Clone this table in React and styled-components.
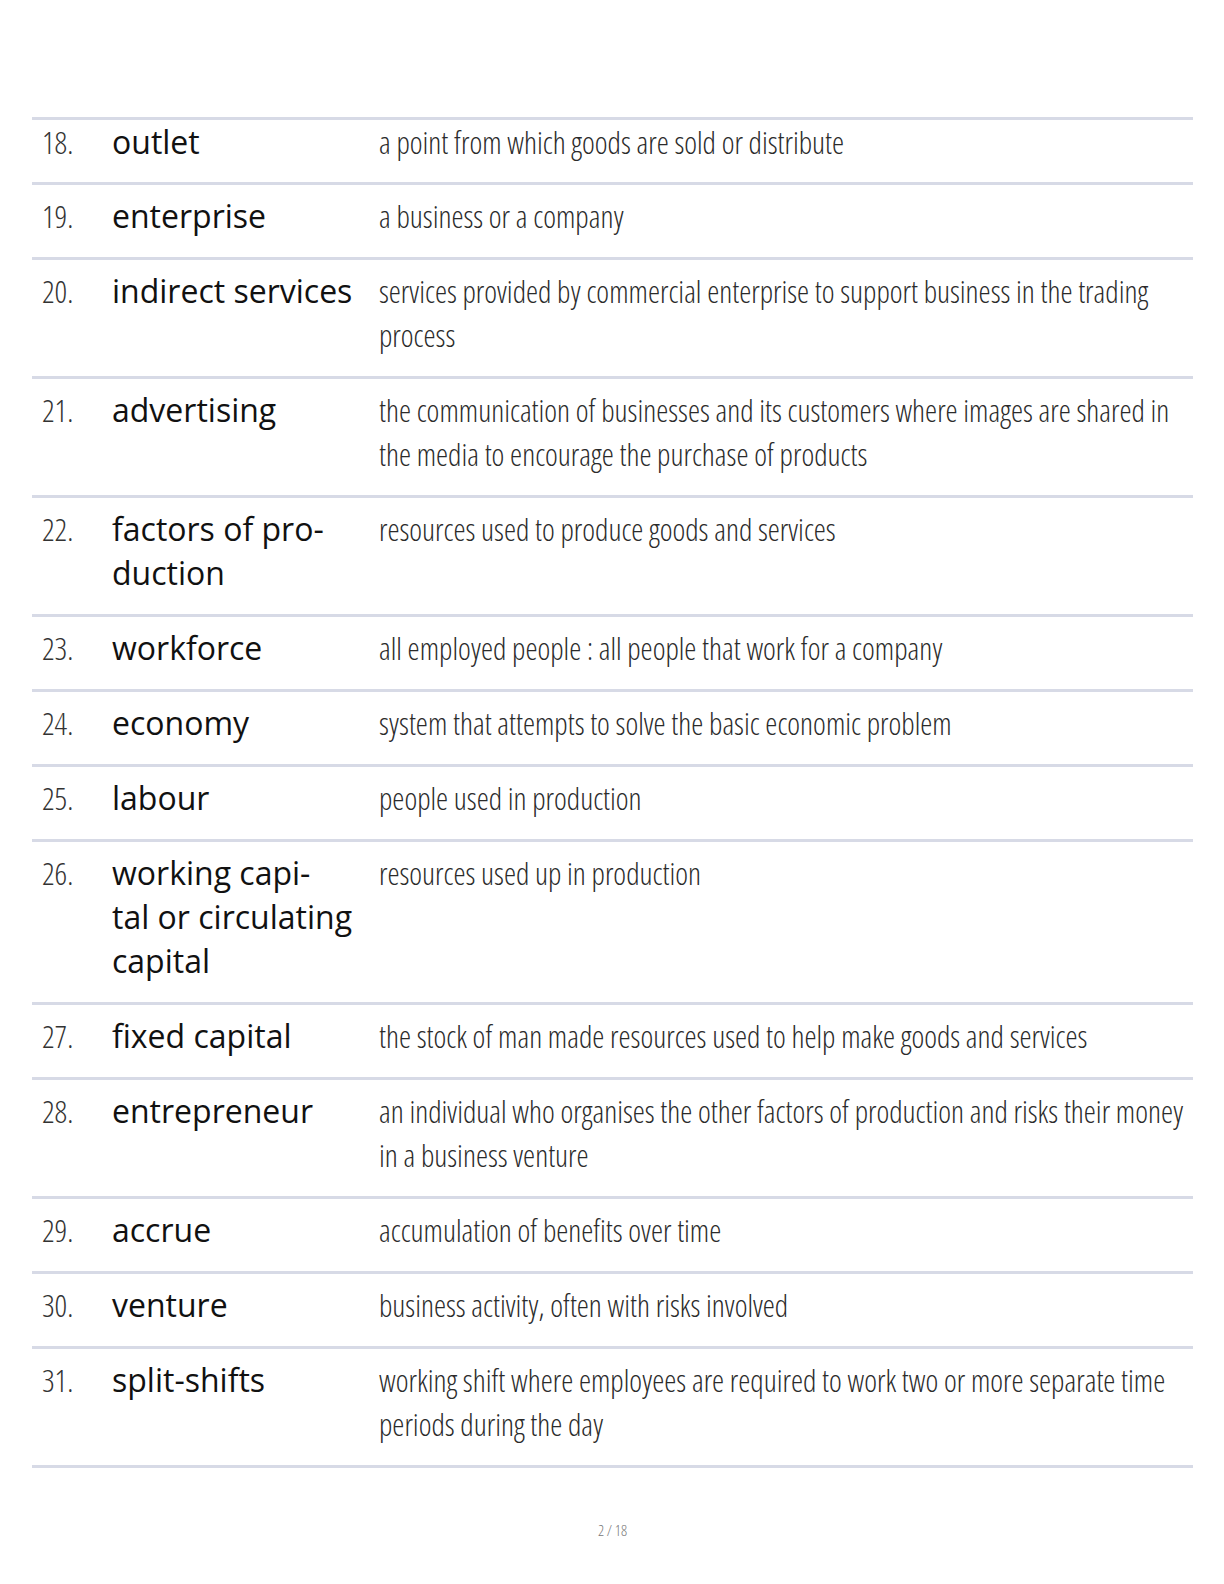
import React from 'react';
import styled, { createGlobalStyle } from 'styled-components';

const GlobalStyle = createGlobalStyle`
  html, body {
    margin: 0;
    padding: 0;
    background: #ffffff;
  }
`;

const Page = styled.div`
  width: 1224px;
  min-height: 1584px;
  box-sizing: border-box;
  padding: 117px 31px 0 32px;
  display: flex;
  flex-direction: column;
`;

const Table = styled.div`
  border-top: 3px solid #d7dae6;
  display: flex;
  flex-direction: column;
`;

const Row = styled.div`
  display: grid;
  grid-template-columns: 80px 267px 1fr;
  padding: ${(p) => (p.first ? '0 0 18px' : '9px 0 19px')};
  border-bottom: 3px solid #d7dae6;
`;

const Num = styled.div`
  padding-left: 10px;
  font-family: 'Open Sans', 'Liberation Sans', sans-serif;
  font-stretch: 75%;
  font-weight: 300;
  font-size: 31px;
  line-height: 44px;
  color: #333;
`;

const Term = styled.div`
  font-family: 'Open Sans', 'Noto Sans', sans-serif;
  font-size: 32px;
  line-height: 44px;
  color: #111;
  white-space: nowrap;
`;

const Def = styled.div`
  font-family: 'Open Sans', 'Liberation Sans', sans-serif;
  font-stretch: 75%;
  font-weight: 300;
  font-size: 30.5px;
  line-height: 44px;
  color: #2b2b2b;
`;

const Footer = styled.div`
  margin-top: 52px;
  text-align: center;
  font-family: 'Open Sans', 'Liberation Sans', sans-serif;
  font-stretch: 75%;
  font-weight: 300;
  font-size: 15px;
  color: #777;
`;

const rows = [
  ['18.', ['outlet'], 'a point from which goods are sold or distribute'],
  ['19.', ['enterprise'], 'a business or a company'],
  ['20.', ['indirect services'], 'services provided by commercial enterprise to support business in the trading process'],
  ['21.', ['advertising'], 'the communication of businesses and its customers where images are shared in the media to encourage the purchase of products'],
  ['22.', ['factors of pro-', 'duction'], 'resources used to produce goods and services'],
  ['23.', ['workforce'], 'all employed people : all people that work for a company'],
  ['24.', ['economy'], 'system that attempts to solve the basic economic problem'],
  ['25.', ['labour'], 'people used in production'],
  ['26.', ['working capi-', 'tal or circulating', 'capital'], 'resources used up in production'],
  ['27.', ['fixed capital'], 'the stock of man made resources used to help make goods and services'],
  ['28.', ['entrepreneur'], 'an individual who organises the other factors of production and risks their money in a business venture'],
  ['29.', ['accrue'], 'accumulation of benefits over time'],
  ['30.', ['venture'], 'business activity, often with risks involved'],
  ['31.', ['split-shifts'], 'working shift where employees are required to work two or more separate time periods during the day'],
];

const App = () => {
  return (
    <>
      <GlobalStyle />
      <Page>
        <Table>
          {rows.map(([n, term, def], i) => (
            <Row key={n} first={i === 0}>
              <Num>{n}</Num>
              <Term>
                {term.map((line, j) => (
                  <React.Fragment key={j}>
                    {j > 0 && <br />}
                    {line}
                  </React.Fragment>
                ))}
              </Term>
              <Def>{def}</Def>
            </Row>
          ))}
        </Table>
        <Footer>2 / 18</Footer>
      </Page>
    </>
  );
};

export default App;
